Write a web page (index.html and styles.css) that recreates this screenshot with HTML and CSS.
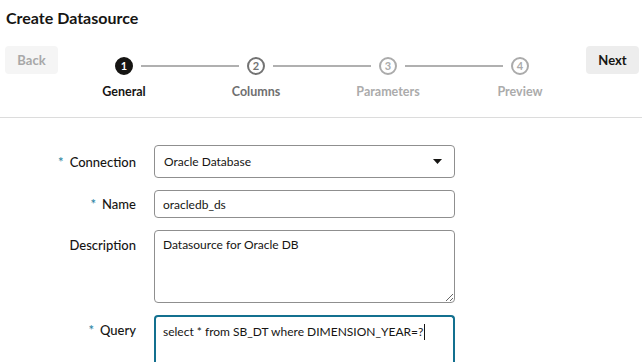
FILE: index.html
```html
<!DOCTYPE html>
<html lang="en">
<head>
<meta charset="UTF-8">
<meta name="viewport" content="width=device-width, initial-scale=1.0">
<title>Create Datasource</title>
<link rel="stylesheet" href="styles.css">
</head>
<body>
<h1 class="page-title">Create Datasource</h1>

<div class="train-bar">
  <button class="btn" disabled>Back</button>

  <ol class="train">
    <li class="step current">
      <div class="step-track"><span class="line"></span><span class="dot">1</span><span class="line"></span></div>
      <span class="step-label">General</span>
    </li>
    <li class="step">
      <div class="step-track"><span class="line"></span><span class="dot">2</span><span class="line"></span></div>
      <span class="step-label">Columns</span>
    </li>
    <li class="step disabled">
      <div class="step-track"><span class="line"></span><span class="dot">3</span><span class="line"></span></div>
      <span class="step-label">Parameters</span>
    </li>
    <li class="step disabled">
      <div class="step-track"><span class="line"></span><span class="dot">4</span><span class="line"></span></div>
      <span class="step-label">Preview</span>
    </li>
  </ol>

  <button class="btn">Next</button>
</div>

<form class="form">
  <div class="row">
    <label class="label required" for="conn">Connection</label>
    <div class="select-wrap">
      <select id="conn" class="field select">
        <option>Oracle Database</option>
      </select>
      <svg class="caret" width="9" height="5" viewBox="0 0 9 5"><path d="M0 0h9L4.5 5z" fill="#161513"/></svg>
    </div>
  </div>
  <div class="row">
    <label class="label required" for="name">Name</label>
    <input id="name" class="field input" type="text" value="oracledb_ds">
  </div>
  <div class="row top">
    <label class="label" for="desc">Description</label>
    <textarea id="desc" class="field textarea">Datasource for Oracle DB</textarea>
  </div>
  <div class="row top">
    <label class="label required" for="query">Query</label>
    <div class="field query"><span>select * from SB_DT where DIMENSION_YEAR=?</span><span class="cursor"></span></div>
  </div>
</form>

</body>
</html>
```

FILE: styles.css
```css
/* page */
body {
  font-family: Lato, "Noto Sans", Arial, sans-serif;
  color: #161513;
  background-color: #fff;
  margin: 0;
  padding: 0;
  overflow: hidden;
}

.page-title {
  margin: 0;
  padding: 6px 6px;
  font-size: 16px;
  line-height: 24px;
  font-weight: 700;
}

/* top bar with train */
.train-bar {
  display: flex;
  align-items: flex-start;
  margin-top: 10px;
  padding: 0 3px 17px 5px;
  border-bottom: 1px solid #dcdcdc;
}

.btn {
  width: 53px;
  height: 28px;
  border: none;
  border-radius: 4px;
  background-color: #ededed;
  color: #161513;
  font-family: inherit;
  font-size: 13px;
  font-weight: 700;
  padding: 0;
}

.btn:disabled {
  background-color: #f5f5f5;
  color: #a8a8a8;
}

.train {
  flex: 1;
  display: flex;
  list-style: none;
  margin: 0;
  padding: 11px 0 0;
}

.step {
  flex: 1;
  display: flex;
  flex-direction: column;
  align-items: center;
}

.step-track {
  display: flex;
  align-items: center;
  width: 100%;
  height: 18px;
}

.line {
  flex: 1;
  height: 2px;
  background-color: #b0b0b0;
}

.line:first-child {
  margin-right: 8px;
}

.line:last-child {
  margin-left: 8px;
}

.step:first-child .line:first-child,
.step:last-child .line:last-child {
  visibility: hidden;
}

.dot {
  width: 14px;
  height: 14px;
  border: 2px solid #737373;
  border-radius: 50%;
  font-size: 11px;
  font-weight: 700;
  line-height: 14px;
  text-align: center;
  color: #737373;
}

.step-label {
  margin-top: 9px;
  font-size: 12.5px;
  font-weight: 700;
  line-height: 16px;
  color: #6f6f6f;
}

.step.current .dot {
  background-color: #161513;
  border-color: #161513;
  color: #fff;
}

.step.current .step-label {
  color: #161513;
}

.step.disabled .dot {
  border-color: #ababab;
  color: #ababab;
}

.step.disabled .step-label {
  color: #ababab;
}

/* form */
.form {
  padding-top: 27px;
  width: 455px;
}

.row {
  display: flex;
  align-items: center;
  margin-bottom: 12px;
}

.row.top {
  align-items: flex-start;
}

.label {
  width: 136px;
  margin-right: 18px;
  text-align: right;
  font-size: 13px;
  line-height: 16px;
  font-weight: 500;
}

.row.top .label {
  padding-top: 7px;
}

.required::before {
  content: "*";
  color: #227e9e;
  margin-right: 6px;
}

.field {
  box-sizing: border-box;
  flex: 1;
  border: 1px solid #8f8f8f;
  border-radius: 4px;
  background-color: #fff;
  font-family: inherit;
  font-size: 12px;
  color: #161513;
  margin: 0;
}

.select-wrap {
  flex: 1;
  position: relative;
  display: flex;
}

.select {
  appearance: none;
  height: 33px;
  padding: 0 30px 0 9px;
}

.caret {
  position: absolute;
  right: 13px;
  top: 14px;
  pointer-events: none;
}

.input {
  height: 28px;
  padding: 0 8px;
}

.textarea {
  height: 73px;
  padding: 6px 8px;
  line-height: 16px;
  resize: vertical;
}

.query {
  height: 73px;
  padding: 7px 7px;
  line-height: 16px;
  white-space: nowrap;
  border: 2px solid #13708f;
  border-bottom: none;
}

.cursor {
  display: inline-block;
  width: 1px;
  height: 16px;
  margin-left: 1px;
  background-color: #161513;
  vertical-align: top;
}
```
